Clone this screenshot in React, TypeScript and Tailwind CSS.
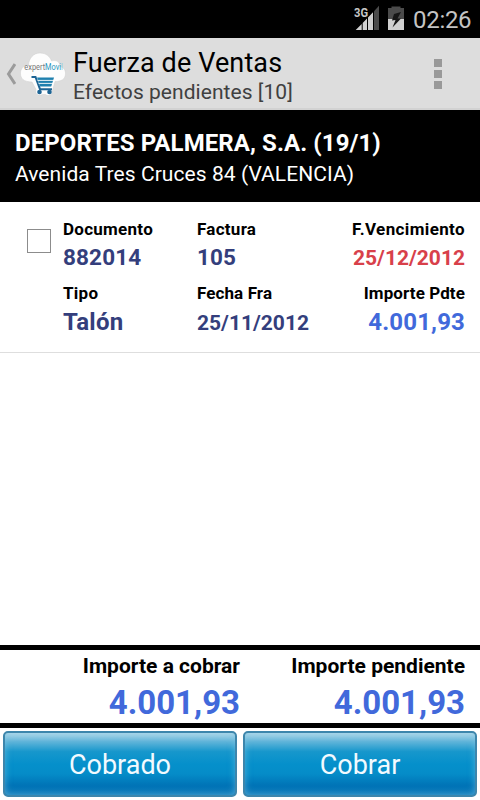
import clsx from "clsx";

interface Field {
  label: string;
  value: string;
  labelClass: string;
  valueClass: string;
}

const fields: Field[] = [
  { label: "Documento", value: "882014", labelClass: "tracking-[0.27px]", valueClass: "text-[22.5px] tracking-[0.15px] text-[#343e7c]" },
  { label: "Factura", value: "105", labelClass: "tracking-[0.27px]", valueClass: "text-[22.5px] tracking-[0.15px] text-[#343e7c]" },
  { label: "F.Vencimiento", value: "25/12/2012", labelClass: "tracking-[0.38px]", valueClass: "pt-px text-[21px] text-[#d8404a]" },
  { label: "Tipo", value: "Talón", labelClass: "tracking-[0.27px]", valueClass: "pt-px text-[24px] tracking-[0.2px] text-[#343e7c]" },
  { label: "Fecha Fra", value: "25/11/2012", labelClass: "tracking-[0.1px]", valueClass: "pt-0.5 text-[21px] text-[#343e7c]" },
  { label: "Importe Pdte", value: "4.001,93", labelClass: "tracking-[0.1px]", valueClass: "pt-px text-[24px] tracking-[0.15px] text-[#4169db]" },
];

const totals = [
  { label: "Importe a cobrar", value: "4.001,93" },
  { label: "Importe pendiente", value: "4.001,93" },
];

function SignalIcon() {
  return (
    <svg width="26" height="26" viewBox="0 0 26 26" className="block">
      <path d="M20 25V6.200L25 .7V25Z" fill="#4b4b4b" />
      <path d="M1.700 25l6-6v6ZM8.700 25v-7L13 13.500V25ZM14 25V12.400l5-5.200V25Z" fill="#d0d0d0" />
      <text x="0" y="12" fontSize="13.5" fontWeight="700" fill="#c6c6c6" textLength="14" lengthAdjust="spacingAndGlyphs">
        3G
      </text>
    </svg>
  );
}

function BatteryIcon() {
  return (
    <svg width="16" height="24" viewBox="0 0 16 24" className="block">
      <path d="M3.500 .5h9V2H16v11H0V2h3.500Z" fill="#4b4b4b" />
      <path d="M0 13h16v11H0Z" fill="#d0d0d0" />
      <path d="M13 6 6 8l-2 6.500 3.500-.5-3 7.500L13 12.500H9.500Z" fill="#161616" />
    </svg>
  );
}

function AppLogo() {
  return (
    <svg width="46" height="46" viewBox="0 0 46 46" className="block">
      <path
        d="M12 30C4 30 .5 26.500 .5 21.500c0-5 3-8 8-8.500C9 6 13.500 1 20 1c6 0 10 3.500 11.500 8 5-1.500 8.500 1 8.500 5.500 4 1 5.500 4 5.500 7 0 6-4.500 8-10.500 8l-2.500 9c0 4.500-4 6.500-7 4h-3c-4 2-8-.5-6.500-5Z"
        fill="#fdfdfd"
        stroke="#cfcfcf"
        strokeWidth=".5"
      />
      <text x="5" y="18.500" fontSize="8.600" transform="scale(0.86 1)" fill="#777">
        expert<tspan fill="#2596c0">Movi</tspan><tspan fill="#8ccbe0">l</tspan>
      </text>
      <path d="M11.500 25h4l4.500 12.200h12" fill="none" stroke="#1d6494" strokeWidth="2" />
      <path d="M17 25.500h17l-2.800 9H20Z" fill="#1f80ae" />
      <path d="M17.500 28.400h17M18.500 31.400h14.500" stroke="#fff" strokeWidth=".9" />
      <circle cx="19.500" cy="40" r="2.300" fill="#1d6494" />
      <circle cx="29.500" cy="40" r="2.300" fill="#1d6494" />
    </svg>
  );
}

function StatusBar() {
  return (
    <div className="flex h-[38px] bg-black pl-[354px] text-[#c4c4c4]">
      <div className="pt-[5px]">
        <SignalIcon />
      </div>
      <div className="ml-2 pt-1.5">
        <BatteryIcon />
      </div>
      <span className="ml-[9px] pt-1 text-[24px] leading-[32px] tracking-[-0.3px]">02:26</span>
    </div>
  );
}

function ActionBar() {
  return (
    <div className="flex h-[72px] border-b-2 border-[#d2d2d2] bg-[#dddddd]">
      <svg width="10" height="22" viewBox="0 0 10 22" className="mt-[25px] ml-[6px] block">
        <path d="M9 1 2.500 11 9 21" fill="none" stroke="#9b9b9b" strokeWidth="3" />
      </svg>
      <div className="mt-[14px] ml-1">
        <AppLogo />
      </div>
      <div className="ml-[7px] flex-1 pt-[9px]">
        <h1 className="text-[27px] leading-[32px] tracking-[0.12px] text-black">Fuerza de Ventas</h1>
        <p className="pt-px text-[21px] leading-[25px] tracking-[0.05px] text-[#404040]">Efectos pendientes [10]</p>
      </div>
      <div className="mt-[21px] mr-[38px] flex flex-col gap-[3px]">
        <i className="size-2 bg-[#999]" />
        <i className="size-2 bg-[#999]" />
        <i className="size-2 bg-[#999]" />
      </div>
    </div>
  );
}

function ActionButton({ label }: { label: string }) {
  return (
    <button className="h-[66px] rounded-[5px] border-2 border-[#3d86ac] bg-[linear-gradient(to_bottom,#b3d9ea_0%,#5fb4d9_14%,#1797cc_30%,#0590cb_50%,#058cc8_66%,#0074b7_84%,#0a79b8_100%)] pt-[3px] text-[27px] text-[#f2faff] shadow-[inset_0_0_7px_0_rgba(130,200,230,0.6)]">
      {label}
    </button>
  );
}

export default function App() {
  return (
    <div className="flex h-[800px] w-[480px] flex-col bg-white font-['Roboto',sans-serif] whitespace-nowrap">
      <StatusBar />
      <ActionBar />

      {/* Customer */}
      <div className="h-[92px] bg-black pt-[17px] pl-[15px] text-white">
        <h2 className="text-[24px] leading-[32px] font-bold tracking-[0.09px]">DEPORTES PALMERA, S.A. (19/1)</h2>
        <p className="mt-px text-[21px] leading-[28px] tracking-[0.07px]">Avenida Tres Cruces 84 (VALENCIA)</p>
      </div>

      {/* Pending document */}
      <div className="flex h-[151px] border-b border-[#dedede] pt-[17px] pr-[15px]">
        <span className="mt-[10px] ml-[27px] size-6 border border-[#8c8c8c]" />
        <div className="ml-3 grid flex-1 auto-rows-[54px] grid-cols-[134px_134px_134px] content-start gap-y-[10px] font-bold">
          {fields.map((f, i) => (
            <div key={f.label} className={clsx(i % 3 === 2 && "text-right")}>
              <p className={clsx("text-[17px] leading-[20px] text-black", f.labelClass)}>{f.label}</p>
              <p className={clsx("mt-0.5 leading-[32px]", f.valueClass)}>{f.value}</p>
            </div>
          ))}
        </div>
      </div>

      <div className="flex-1" />

      {/* Totals */}
      <div className="flex h-[83px] justify-end border-y-[5px] border-black pt-0.5 pr-[15px] text-right font-bold">
        {totals.map((t) => (
          <div key={t.label} className="w-[225px]">
            <p className="text-[21px] leading-[28px] text-black">{t.label}</p>
            <p className="mt-px text-[33px] leading-[44px] text-[#4169db]">{t.value}</p>
          </div>
        ))}
      </div>

      <div className="grid h-[72px] grid-cols-2 gap-x-1.5 px-[3px] pt-[3px]">
        <ActionButton label="Cobrado" />
        <ActionButton label="Cobrar" />
      </div>
    </div>
  );
}
